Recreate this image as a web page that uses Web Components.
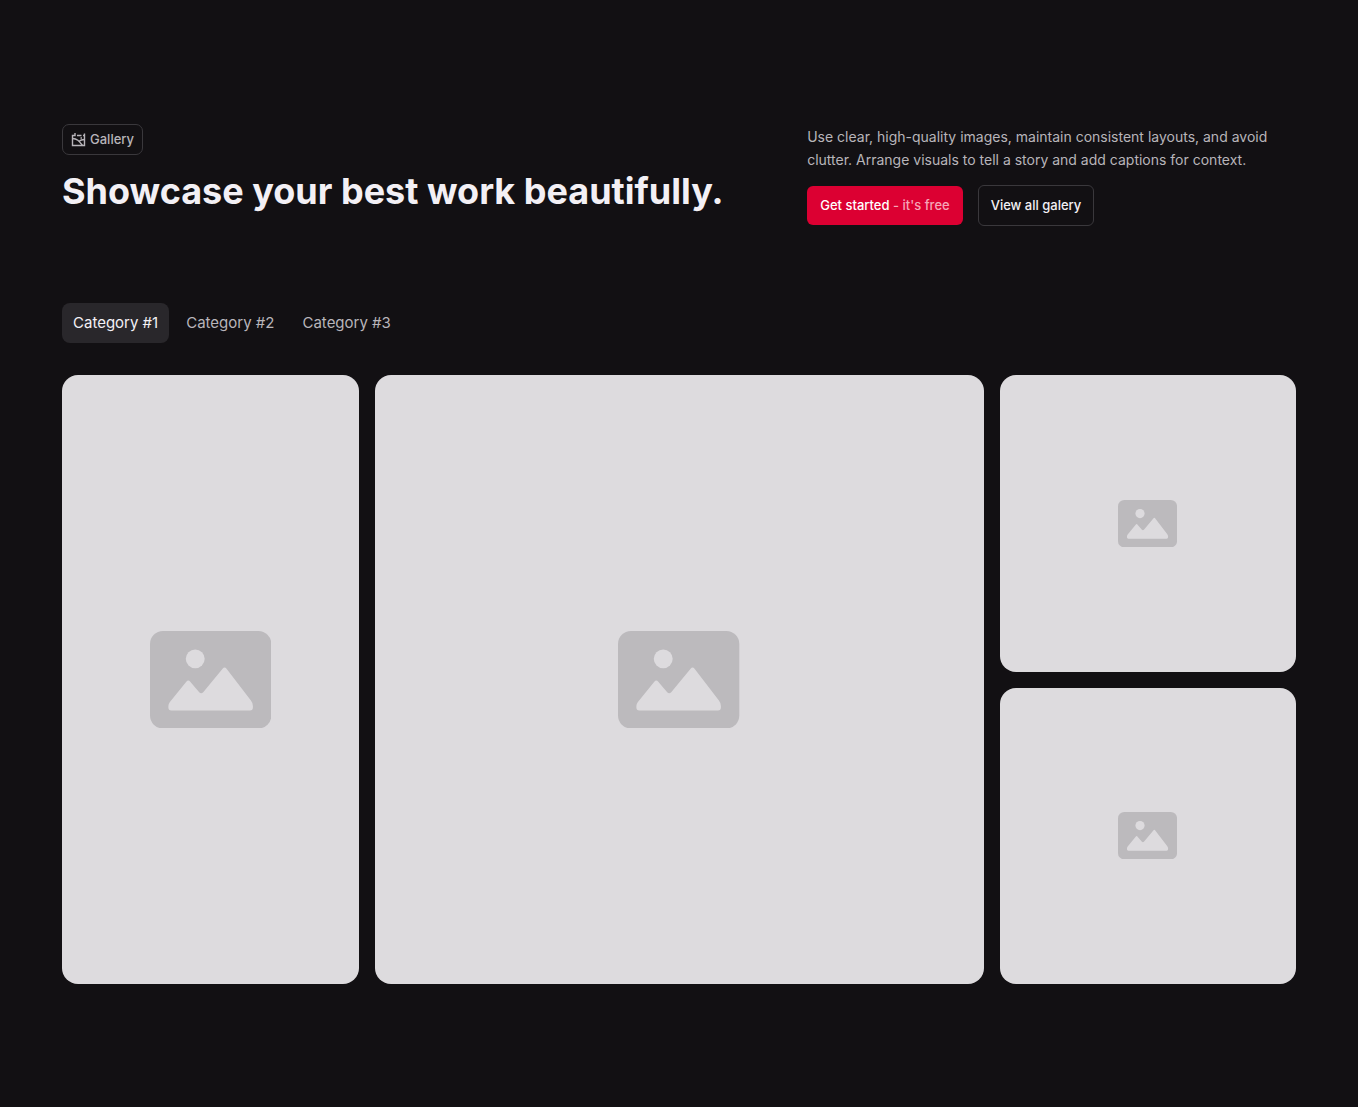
<!doctype html>
<html lang="en">
<head>
    <meta charset="utf-8">
    <meta name="viewport" content="width=device-width, initial-scale=1">
    <title>Gallery</title>
    <style>
        body {
            margin: 0;
            background-color: #121013;
            color: #f3f0f5;
            font-family: Inter, "Liberation Sans", sans-serif;
        }
    </style>
    <script>
        // attach an open shadow root filled with the given markup
        function attachTemplate(element, html) {
            const template = document.createElement('template');
            template.innerHTML = html;
            const shadowRoot = element.attachShadow({mode: 'open'});
            shadowRoot.appendChild(template.content.cloneNode(true));
        }

        class GallerySection extends HTMLElement {

            constructor() {
                super();
                attachTemplate(this, `
                <style>
                    :host {
                        display: block;
                        padding: 124px 62px;
                    }
                    header {
                        display: grid;
                        grid-template-columns: 3fr 2fr;
                        gap: 12px;
                        margin-bottom: 77px;
                    }
                    .intro {
                        display: flex;
                        flex-direction: column;
                        align-items: flex-start;
                        gap: 12px;
                    }
                    .actions {
                        display: flex;
                        align-items: center;
                        gap: 15px;
                        margin-top: 14px;
                    }
                    nav {
                        display: flex;
                        gap: 6px;
                        margin-bottom: 32px;
                    }
                    .grid {
                        display: grid;
                        grid-template-columns: repeat(4, minmax(0, 1fr));
                        gap: 16px;
                    }
                </style>
                <header>
                    <div class="intro">
                        <slot name="badge"></slot>
                        <slot name="title"></slot>
                    </div>
                    <div>
                        <slot name="text"></slot>
                        <div class="actions"><slot name="action"></slot></div>
                    </div>
                </header>
                <nav aria-label="Categories"><slot name="tab"></slot></nav>
                <div class="grid"><slot></slot></div>
                `);
            }
        }

        class SectionBadge extends HTMLElement {

            constructor() {
                super();
                attachTemplate(this, `
                <style>
                    :host {
                        display: inline-flex;
                        align-items: center;
                        gap: 4px;
                        padding: 6px 8px;
                        border: 1px solid #3a383c;
                        border-radius: 7px;
                        color: #b8b5ba;
                        font-size: 13px;
                        font-weight: 500;
                        line-height: 17px;
                    }
                    svg {
                        width: 15px;
                        height: 15px;
                    }
                </style>
                <svg viewBox="0 0 15 15" fill="none" stroke="currentColor" stroke-width="1.4" aria-hidden="true">
                    <path d="M4 1v2.500H1.500v10h12V1.500M6 3.500h4.500M13.500 3.500h-1.500"/>
                    <path d="M1.500 6.500C6 6.500 8 9 11.500 13.500M7.500 9.500C9.500 8 11 7.500 13.500 7.500"/>
                    <path d="M9.500 6h1.500"/>
                </svg>
                <slot></slot>
                `);
            }
        }

        class SectionTitle extends HTMLElement {

            constructor() {
                super();
                attachTemplate(this, `
                <style>
                    :host {
                        display: block;
                    }
                    h2 {
                        margin: 0;
                        font-size: 36px;
                        font-weight: 700;
                        line-height: 48px;
                    }
                </style>
                <h2><slot></slot></h2>
                `);
            }
        }

        class SectionText extends HTMLElement {

            constructor() {
                super();
                attachTemplate(this, `
                <style>
                    :host {
                        display: block;
                        padding-top: 1px;
                        color: #b8b5ba;
                        font-size: 14px;
                        line-height: 23px;
                    }
                    p {
                        margin: 0;
                    }
                </style>
                <p><slot></slot></p>
                `);
            }
        }

        class ActionLink extends HTMLElement {

            constructor() {
                super();
                attachTemplate(this, `
                <style>
                    :host {
                        display: block;
                    }
                    a {
                        display: block;
                        padding: 11px 13px;
                        border-radius: 6px;
                        background-color: #dc0032;
                        color: #fff;
                        font-size: 13px;
                        font-weight: 500;
                        line-height: 17px;
                        text-decoration: none;
                        white-space: nowrap;
                    }
                    :host([outline]) a {
                        padding: 11px 12px;
                        border: 1px solid #3a383c;
                        background-color: transparent;
                        color: #f3f0f5;
                    }
                    ::slotted(span) {
                        color: #f5a6b8;
                    }
                </style>
                <a href="#"><slot></slot></a>
                `);
            }
        }

        class CategoryTab extends HTMLElement {

            constructor() {
                super();
                attachTemplate(this, `
                <style>
                    :host {
                        display: block;
                    }
                    button {
                        display: block;
                        margin: 0;
                        padding: 10px 11px;
                        border: 0;
                        border-radius: 8px;
                        background-color: transparent;
                        color: #b8b5ba;
                        font: inherit;
                        font-size: 15px;
                        line-height: 20px;
                        cursor: pointer;
                    }
                    :host([active]) button {
                        background-color: #29272b;
                        color: #f3f0f5;
                    }
                </style>
                <button type="button"><slot></slot></button>
                `);
            }

            connectedCallback() {
                this.addEventListener('click', this.select);
                this.render();
            }

            disconnectedCallback() {
                this.removeEventListener('click', this.select);
            }

            static get observedAttributes() {
                return ['active'];
            }

            attributeChangedCallback() {
                this.render();
            }

            render() {
                this.shadowRoot.querySelector('button').setAttribute('aria-pressed', this.hasAttribute('active'));
            }

            select() {
                for (const tab of this.parentElement.querySelectorAll('category-tab')) {
                    tab.toggleAttribute('active', tab === this);
                }
            }
        }

        class GalleryTile extends HTMLElement {

            constructor() {
                super();
                attachTemplate(this, `
                <style>
                    :host {
                        display: grid;
                        place-items: center;
                        aspect-ratio: 1;
                        border-radius: 16px;
                        background-color: #dddbde;
                        container-type: size;
                    }
                    :host([tall]) {
                        aspect-ratio: auto;
                        grid-row: span 2;
                    }
                    :host([large]) {
                        grid-column: span 2;
                        grid-row: span 2;
                    }
                    svg {
                        display: block;
                        height: 16cqh;
                    }
                </style>
                <svg viewBox="0 0 122 98" aria-hidden="true">
                    <rect width="122" height="98" rx="13" fill="#bcbabd"/>
                    <circle cx="45.500" cy="28" r="9.500" fill="#dddbde"/>
                    <path d="M18.500 75.500 Q18.500 73.500 20 71.500 L36.500 51 Q38.500 48.500 40.500 51 L49.500 61.500 Q51.500 63.500 53.500 61.500 L73 38 Q75 35.500 77 38 L101.500 70 Q103.500 72.500 103.500 75.500 V77 Q103.500 80 100.500 80 H21.500 Q18.500 80 18.500 77 Z" fill="#dddbde"/>
                </svg>
                `);
            }
        }

        window.customElements.define('gallery-section', GallerySection);
        window.customElements.define('section-badge', SectionBadge);
        window.customElements.define('section-title', SectionTitle);
        window.customElements.define('section-text', SectionText);
        window.customElements.define('action-link', ActionLink);
        window.customElements.define('category-tab', CategoryTab);
        window.customElements.define('gallery-tile', GalleryTile);
    </script>
</head>
<body>
    <gallery-section>
        <section-badge slot="badge">Gallery</section-badge>
        <section-title slot="title">Showcase your best work beautifully.</section-title>
        <section-text slot="text">Use clear, high-quality images, maintain consistent layouts, and avoid clutter. Arrange visuals to tell a story and add captions for context.</section-text>
        <action-link slot="action">Get started <span>- it's free</span></action-link>
        <action-link slot="action" outline>View all galery</action-link>
        <category-tab slot="tab" active>Category #1</category-tab>
        <category-tab slot="tab">Category #2</category-tab>
        <category-tab slot="tab">Category #3</category-tab>
        <gallery-tile tall></gallery-tile>
        <gallery-tile large></gallery-tile>
        <gallery-tile></gallery-tile>
        <gallery-tile></gallery-tile>
    </gallery-section>
</body>

</html>
